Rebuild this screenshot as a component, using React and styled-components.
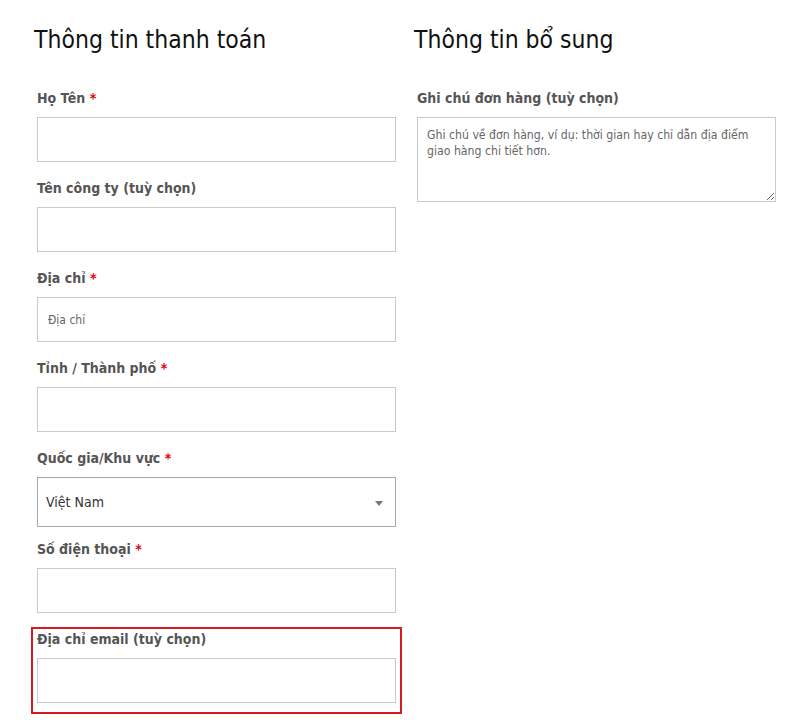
import styled, { createGlobalStyle } from "styled-components";

const GlobalStyle = createGlobalStyle`
    body{
        margin: 0;
        background: #fff;
        font-family: "DejaVu Sans Condensed", "DejaVu Sans", sans-serif;
    }
`;

const Page = styled.div`
    display: grid;
    grid-template-columns: 359px 359px;
    column-gap: 21px;
    padding: 20px 0 0 37px;
`;

const Column = styled.div`
    display: flex;
    flex-direction: column;
`;

const Heading = styled.h3`
    margin: 0 0 28px -3px;
    height: 40px;
    line-height: 40px;
    font-size: 24.5px;
    font-weight: normal;
    color: #111;
`;

const Field = styled.div`
    display: flex;
    flex-direction: column;
    padding-bottom: 16px;
    ${ props => props.highlighted && `
        border: 2px solid #d71920;
        margin: -2px -6px 0;
        padding: 0 4px 9px;
    ` }
`;

const Label = styled.label`
    height: 20px;
    line-height: 20px;
    margin-bottom: 9px;
    font-size: 14px;
    font-weight: bold;
    color: #555;
`;

const Required = styled.span`
    color: #e0000b;
`;

const Input = styled.input`
    box-sizing: border-box;
    width: 100%;
    height: 45px;
    margin: 0;
    padding: 0 10px;
    border: 1px solid #c9c9c9;
    background: #fff;
    font-family: inherit;
    font-size: 12px;
    color: #333;
    outline: none;
    &::placeholder{
        color: #666;
    }
`;

const Select = styled.div`
    box-sizing: border-box;
    height: 50px;
    margin-bottom: -4px;
    padding: 0 12px 0 8px;
    display: flex;
    align-items: center;
    justify-content: space-between;
    border: 1px solid #a9a9a9;
    font-size: 14px;
    color: #333;
`;

const Caret = styled.span`
    width: 0;
    height: 0;
    border-left: 4px solid transparent;
    border-right: 4px solid transparent;
    border-top: 5px solid #777;
    margin-top: 2px;
`;

const TextArea = styled.textarea`
    box-sizing: border-box;
    width: 100%;
    height: 85px;
    margin: 0;
    padding: 9px 9px;
    border: 1px solid #c9c9c9;
    font-family: inherit;
    font-size: 12.2px;
    line-height: 16px;
    color: #333;
    resize: vertical;
    outline: none;
    &::placeholder{
        color: #666;
    }
`;

const billing = [
    { label: "Họ Tên", required: true },
    { label: "Tên công ty (tuỳ chọn)" },
    { label: "Địa chỉ", required: true, placeholder: "Địa chỉ" },
    { label: "Tỉnh / Thành phố", required: true },
    { label: "Quốc gia/Khu vực", required: true, select: "Việt Nam" },
    { label: "Số điện thoại", required: true },
    { label: "Địa chỉ email (tuỳ chọn)", highlighted: true },
];

export default function App(){
    return(
        <Page>
            <GlobalStyle />
            <Column>
                <Heading>Thông tin thanh toán</Heading>
                { billing.map( (field, index) =>
                    <Field key={index} highlighted={ field.highlighted }>
                        <Label>{ field.label }{ field.required ? <> <Required>*</Required></> : null }</Label>
                        { field.select
                            ? <Select>{ field.select }<Caret /></Select>
                            : <Input placeholder={ field.placeholder } /> }
                    </Field>
                )}
            </Column>
            <Column>
                <Heading>Thông tin bổ sung</Heading>
                <Field>
                    <Label>Ghi chú đơn hàng (tuỳ chọn)</Label>
                    <TextArea placeholder="Ghi chú về đơn hàng, ví dụ: thời gian hay chỉ dẫn địa điểm giao hàng chi tiết hơn." />
                </Field>
            </Column>
        </Page>
    );
}
